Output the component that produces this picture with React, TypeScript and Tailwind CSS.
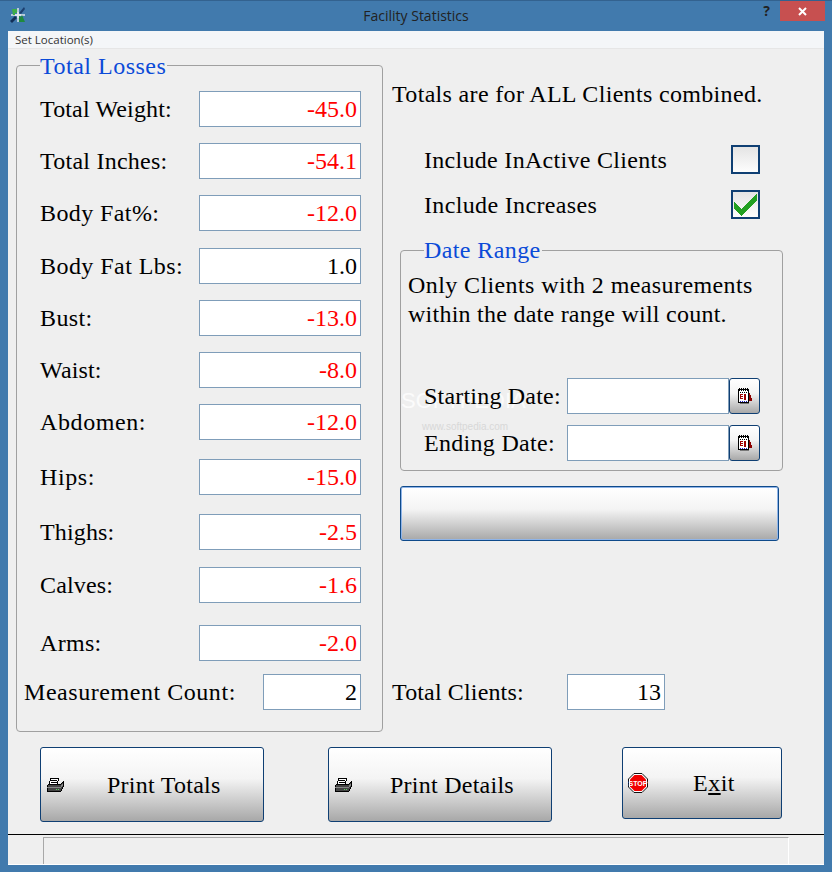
import React from "react";

const serif = { fontFamily: '"Liberation Serif", serif' };

const losses = [
  { label: "Total Weight:", value: "-45.0", mt: "mt-[25px]", ls: "tracking-[0.15px]" },
  { label: "Total Inches:", value: "-54.1", mt: "mt-[16px]", ls: "tracking-[0.25px]" },
  { label: "Body Fat%:", value: "-12.0", mt: "mt-[16px]", ls: "tracking-[0.4px]" },
  { label: "Body Fat Lbs:", value: "1.0", mt: "mt-[17px]", ls: "tracking-[0.45px]", black: true },
  { label: "Bust:", value: "-13.0", mt: "mt-[16px]", ls: "tracking-[0.4px]" },
  { label: "Waist:", value: "-8.0", mt: "mt-[16px]", ls: "tracking-[0.15px]" },
  { label: "Abdomen:", value: "-12.0", mt: "mt-[16px]", ls: "tracking-[0.6px]" },
  { label: "Hips:", value: "-15.0", mt: "mt-[19px]", ls: "tracking-[0.6px]" },
  { label: "Thighs:", value: "-2.5", mt: "mt-[19px]", ls: "tracking-[0.15px]" },
  { label: "Calves:", value: "-1.6", mt: "mt-[17px]", ls: "tracking-[0.15px]" },
  { label: "Arms:", value: "-2.0", mt: "mt-[22px]", ls: "tracking-[0.3px]" },
];

const btnGradient = "bg-[linear-gradient(#ffffff_0%,#f4f4f4_42%,#a8a8a8_100%)]";

function PrinterIcon() {
  return (
    <svg width="18" height="16" viewBox="0 0 18 16" shapeRendering="crispEdges">
      <path d="M5 1h8l-2 6H3z" fill="#fff" stroke="#000" />
      <path d="M5 3.5h6M4.5 5h6" stroke="#000" />
      <path d="M3 7h12l2-2v5l-2 4H1V9z" fill="#444" stroke="#000" />
      <path d="M1 10h14l2-3" stroke="#888" fill="none" />
      <path d="M10 12h1M12 12h1" stroke="#5fd35f" />
    </svg>
  );
}

function StopIcon() {
  return (
    <svg width="20" height="20" viewBox="0 0 20 20">
      <polygon points="6,0.5 14,0.5 19.5,6 19.5,14 14,19.5 6,19.5 0.5,14 0.5,6" fill="#fff" stroke="#111" />
      <polygon points="6.5,2 13.5,2 18,6.5 18,13.5 13.5,18 6.5,18 2,13.5 2,6.5" fill="#f00000" />
      <text x="10" y="12.6" textAnchor="middle" fontSize="7" fontWeight="700" fill="#fff" fontFamily="Liberation Sans, sans-serif">STOP</text>
    </svg>
  );
}

function CalendarIcon() {
  return (
    <svg width="16" height="18" viewBox="0 0 16 18" shapeRendering="crispEdges">
      <path d="M11 6h2l2 6v2h-4z" fill="#8b0000" />
      <path d="M3 15h9v2H3z" fill="#777" />
      <path d="M1.5 2.5h10v13h-10z" fill="#fff" stroke="#000" />
      <path d="M2 1v3M4 1v3M6 1v3M8 1v3M10 1v3" stroke="#000" />
      <path d="M3 5.5h7" stroke="#000" strokeDasharray="1 1" />
      <path d="M3 7h3v1H4v1h2v1H4v1h2v1H3zM7 7h2v6H7z" fill="#a00000" />
      <path d="M3 14h7" stroke="#22c" strokeDasharray="1 1" />
    </svg>
  );
}

function AppIcon() {
  return (
    <svg width="16" height="16" viewBox="0 0 16 16">
      <path d="M8 1v14M1 8h14" stroke="#dfe5ea" strokeWidth="1.5" />
      <path d="M2 2h5v4H5v2H3z" fill="#3fae49" />
      <path d="M14 0L9 6l2 1 4-5z" fill="#1d3f6e" />
      <path d="M0 14l5-5 2 2-5 5z" fill="#122f57" />
      <path d="M9 15V9l2 1 1-2 3 7z" fill="#1f8a3d" />
      <path d="M8 5v6M5 8h6" stroke="#e6eaee" strokeWidth="1.5" />
    </svg>
  );
}

function CheckBox({ checked }: { checked?: boolean }) {
  return (
    <div className="relative h-[29px] w-[29px] border-2 border-[#0f3f73] bg-[linear-gradient(#e4e4e4,#fdfdfd)]">
      {checked && (
        <svg className="absolute left-0 top-0" width="25" height="25" viewBox="0 0 25 25" shapeRendering="crispEdges">
          <path d="M1 9l7.5 8L24 1v8L8.5 24 1 16z" fill="#22a022" />
        </svg>
      )}
    </div>
  );
}

function ValueBox({ value, className, black }: { value?: string; className?: string; black?: boolean }) {
  return (
    <div
      className={`flex h-9 items-center justify-end border border-[#7f9db9] bg-white pr-[3px] text-2xl ${
        black ? "text-black" : "text-[#ff0000]"
      } ${className ?? ""}`}
    >
      {value}
    </div>
  );
}

function DateRow({ label, className, ls }: { label: string; className?: string; ls: string }) {
  return (
    <div className={`relative flex items-center ${className ?? ""}`}>
      <span className={`w-[159px] pl-[16px] text-2xl ${ls}`}>{label}</span>
      <div className="h-9 w-[162px] border border-[#7f9db9] bg-white" />
      <button className={`flex h-9 w-[31px] items-center justify-center rounded-[3px] border border-[#0f3f73] ${btnGradient}`}>
        <CalendarIcon />
      </button>
    </div>
  );
}

function BigButton({ label, icon, className }: { label: React.ReactNode; icon: React.ReactNode; className: string }) {
  return (
    <button className={`flex items-center rounded-[3px] border border-[#0f3f73] text-2xl ${btnGradient} ${className}`}>
      {icon}
      {label}
    </button>
  );
}

export default function App() {
  return (
    <div className="flex h-[872px] w-[832px] flex-col overflow-hidden border-t border-[#33628f] bg-[#417aad] text-black" style={serif}>
      {/* title bar */}
      <div className="relative flex h-[30px] shrink-0 justify-center pt-[7px] text-[14px] leading-4 text-[#222]" style={{ fontFamily: '"Open Sans", sans-serif' }}>
        <div className="absolute left-[10px] top-[6px]">
          <AppIcon />
        </div>
        Facility Statistics
        <span className="absolute right-[62px] top-[2px] text-[14px] font-bold">?</span>
        <div className="absolute right-[7px] top-0 flex h-5 w-[45px] items-center justify-center bg-[#c75050]">
          <svg width="9" height="9" viewBox="0 0 9 9">
            <path d="M1 1l7 7M8 1L1 8" stroke="#fff" strokeWidth="2" />
          </svg>
        </div>
      </div>

      {/* client area */}
      <div className="mx-2 flex h-[834px] flex-col border-b border-white bg-[#efefef]">
        <div className="flex h-[18px] shrink-0 items-center border-b border-[#e6e6e6] bg-[#f4f6f8] pl-[7px] text-[11.5px] text-[#333]" style={{ fontFamily: '"Open Sans", sans-serif' }}>
          Set Location(s)
        </div>

        <div className="flex">
          {/* Total Losses */}
          <div className="relative ml-2 mt-4 h-[667px] w-[367px] rounded-[4px] border border-[#a0a0a0] pl-[23px]">
            <span className="absolute left-[23px] top-[-14px] bg-[#efefef] pr-px text-2xl leading-7 tracking-[0.5px] text-[#0a4ad8]">Total Losses</span>
            {losses.map((r) => (
              <div key={r.label} className={`flex items-center ${r.mt}`}>
                <span className={`w-[159px] text-2xl ${r.ls}`}>{r.label}</span>
                <ValueBox value={r.value} black={r.black} className="w-[162px]" />
              </div>
            ))}
            <div className="ml-[-16px] mt-[13px] flex items-center">
              <span className="w-[239px] text-2xl tracking-[0.55px]">Measurement Count:</span>
              <ValueBox value="2" black className="w-[98px]" />
            </div>
          </div>

          {/* right side */}
          <div className="relative flex w-[441px] flex-col">
            <p className="ml-[9px] mt-[31px] text-2xl leading-7 tracking-[0.33px]">Totals are for ALL Clients combined.</p>

            <div className="ml-[41px] mt-[37px] flex h-[29px] w-[336px] items-center justify-between text-2xl tracking-[0.3px]">
              Include InActive Clients
              <CheckBox />
            </div>
            <div className="ml-[41px] mt-[16px] flex h-[29px] w-[336px] items-center justify-between text-2xl tracking-[0.35px]">
              Include Increases
              <CheckBox checked />
            </div>

            <div className="relative ml-[17px] mt-[31px] h-[221px] w-[383px] rounded-[4px] border border-[#a0a0a0] pl-[7px] pr-3">
              <span className="absolute left-[23px] top-[-15px] bg-[#efefef] pr-px text-2xl leading-7 tracking-[0.4px] text-[#0a4ad8]">Date Range</span>
              {/* watermark sits behind the labels */}
              <span className="absolute left-0 top-[136px] whitespace-nowrap text-[22px] leading-7 text-white opacity-80" style={{ fontFamily: '"Liberation Sans", sans-serif' }}>SOFTPEDIA</span>
              <span className="absolute left-[21px] top-[170px] whitespace-nowrap text-[10px] leading-3 text-[#d8d8d8]" style={{ fontFamily: '"Liberation Sans", sans-serif' }}>www.softpedia.com</span>
              <p className="relative mt-[20px] whitespace-nowrap text-2xl leading-[29px]">
                <span className="tracking-[0.4px]">Only Clients with 2 measurements</span>
                <br />
                <span className="tracking-[0.25px]">within the date range will count.</span>
              </p>
              <DateRow label="Starting Date:" className="mt-[49px]" ls="tracking-[0.2px]" />
              <DateRow label="Ending Date:" className="mt-[11px]" ls="tracking-[0.3px]" />
            </div>

            <button className={`ml-[17px] mt-[15px] h-[55px] w-[379px] rounded-[3px] border border-[#0f4a8a] shadow-[inset_0_0_0_1px_#8fb4e8] ${btnGradient}`} />

            <div className="ml-[9px] mt-[133px] flex items-center">
              <span className="w-[175px] text-2xl tracking-[0.15px]">Total Clients:</span>
              <ValueBox value="13" black className="w-[98px]" />
            </div>
          </div>
        </div>

        {/* bottom buttons */}
        <div className="ml-8 mt-[15px] flex items-start">
          <BigButton
            className="h-[75px] w-[224px] pl-[5px]"
            icon={<PrinterIcon />}
            label={<span className="ml-[43px] tracking-[0.25px]">Print Totals</span>}
          />
          <BigButton
            className="ml-[64px] h-[75px] w-[224px] pl-[5px]"
            icon={<PrinterIcon />}
            label={<span className="ml-[38px] tracking-[0.25px]">Print Details</span>}
          />
          <BigButton
            className="ml-[70px] h-[72px] w-[160px] pl-[5px]"
            icon={<StopIcon />}
            label={
              <span className="ml-[45px] tracking-[0.5px]">
                E<span className="underline">x</span>it
              </span>
            }
          />
        </div>

        {/* status bar */}
        <div className="mt-3 h-px shrink-0 bg-black" />
        <div className="ml-[35px] mt-[2px] h-[27px] w-[746px] border-l border-r border-t border-[#a8a8a8] border-r-white" />
      </div>
    </div>
  );
}
